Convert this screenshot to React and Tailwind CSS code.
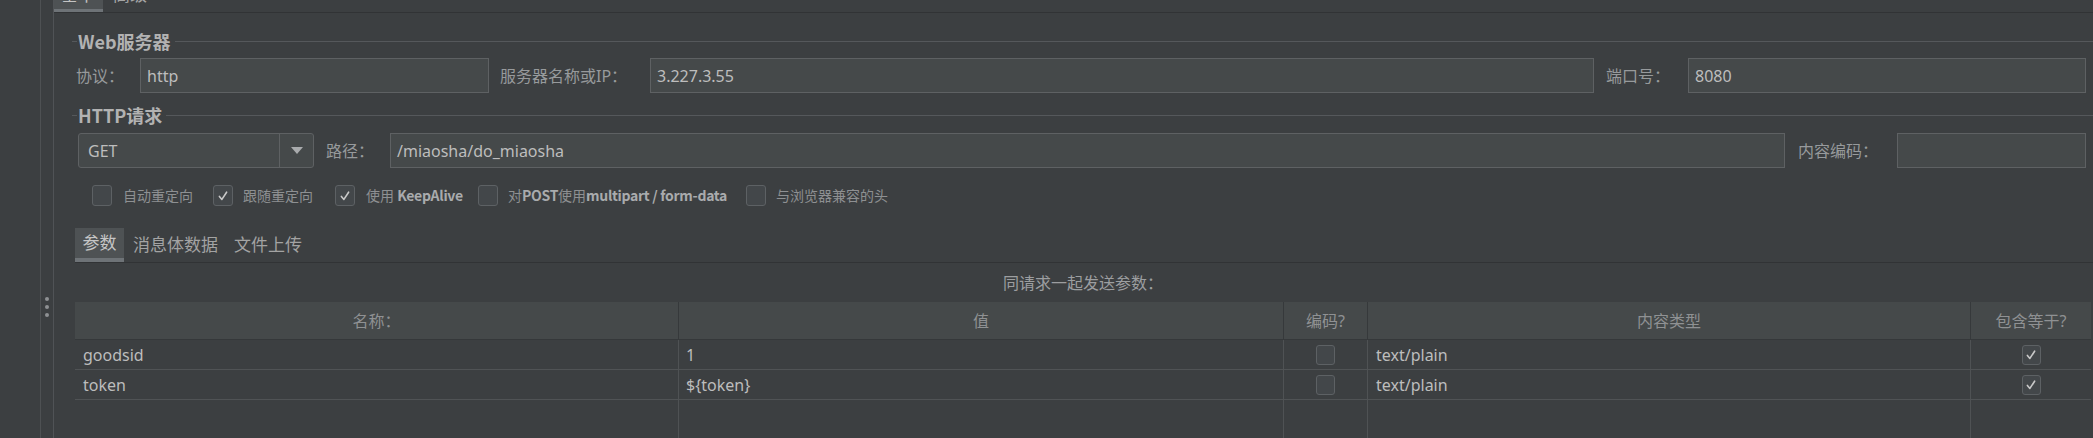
import React from "react";

function Check({ checked, small }) {
  return (
    <div
      className={
        small
          ? "w-[19px] h-[20px] shrink-0 flex items-center justify-center rounded-[3px] border border-[#5d6164] bg-[#43474a]"
          : "w-[20px] h-[21px] shrink-0 flex items-center justify-center rounded-[3px] border border-[#5d6164] bg-[#43474a]"
      }
    >
      {checked && (
        <svg viewBox="0 0 12 12" className="w-[12px] h-[12px]">
          <path d="M2.4 6.4 L4.9 9.4 L9.6 2.2" fill="none" stroke="#c9c9c9" strokeWidth="1.6" strokeLinecap="round" strokeLinejoin="round" />
        </svg>
      )}
    </div>
  );
}

function GroupTitle({ children }) {
  return (
    <div className="h-[20px] flex items-center -ml-[4px] -mr-[7px]">
      <div className="w-[5px] h-px bg-[#55585b]" />
      <span className="pl-[1px] text-[18px] leading-none font-semibold text-[#b2b2b2] font-['Noto_Sans_CJK_SC',sans-serif]">
        {children}
      </span>
      <div className="flex-1 h-px bg-[#55585b] ml-[4px]" />
    </div>
  );
}

function Field({ w, children }) {
  return (
    <div className={"h-[35px] shrink-0 border border-[#5e6163] bg-[#45494a] flex items-center pl-[6px] text-[16px] text-[#bdbdbd] " + w}>
      {children}
    </div>
  );
}

export default function App() {
  return (
    <div className="w-[2093px] h-[438px] overflow-hidden bg-[#3c3f41] flex font-['Noto_Sans','Noto_Sans_CJK_SC',sans-serif] text-[#bbbbbb]">
      <div className="w-[41px] shrink-0 border-r border-[#4e5153]" />
      <div className="w-[13px] shrink-0 border-r border-[#505356] flex flex-col items-center pt-[297px] gap-[4px]">
        <div className="w-[4px] h-[4px] rounded-full bg-[#8e9193]" />
        <div className="w-[4px] h-[4px] rounded-full bg-[#8e9193]" />
        <div className="w-[4px] h-[4px] rounded-full bg-[#8e9193]" />
      </div>

      <div className="flex-1 min-w-0 flex flex-col">
        {/* top tabs, clipped by the window edge */}
        <div className="h-[13px] shrink-0 flex border-b border-[#313335] overflow-hidden">
          <div className="w-[50px] -ml-[1px] h-[12px] bg-[#4e5254] border-b-[3px] border-[#6e7377] overflow-hidden flex justify-center">
            <span className="-mt-[16px] text-[17px] leading-[22px] text-[#c4c4c4]">基本</span>
          </div>
          <div className="h-[12px] overflow-hidden pl-[10px]">
            <span className="-mt-[16px] block text-[17px] leading-[22px] text-[#a5a5a5]">高级</span>
          </div>
        </div>

        <div className="flex-1 flex flex-col pl-[22px] pr-[7px] min-h-0">
          <div className="mt-[18px]">
            <GroupTitle>Web服务器</GroupTitle>
          </div>

          <div className="mt-[7px] h-[35px] flex items-center text-[16px]">
            <div className="w-[64px] shrink-0 text-[#979a9c]">协议：</div>
            <Field w="w-[349px]">http</Field>
            <div className="w-[161px] shrink-0 pl-[11px] text-[#979a9c]">服务器名称或IP：</div>
            <Field w="w-[944px]">3.227.3.55</Field>
            <div className="w-[94px] shrink-0 pl-[12px] text-[#979a9c]">端口号：</div>
            <Field w="w-[398px]">8080</Field>
          </div>

          <div className="mt-[12px]">
            <GroupTitle>HTTP请求</GroupTitle>
          </div>

          <div className="mt-[8px] h-[35px] flex items-center text-[16px]">
            <div className="ml-[2px] w-[236px] h-[35px] shrink-0 rounded-[3px] border border-[#5e6163] bg-[#45494a] flex">
              <div className="flex-1 flex items-center pl-[9px] text-[#bdbdbd]">GET</div>
              <div className="w-[34px] border-l border-[#5e6163] flex items-center justify-center">
                <svg viewBox="0 0 12 7" className="w-[12px] h-[7px]">
                  <path d="M0 0 L12 0 L6 7 Z" fill="#a9abad" />
                </svg>
              </div>
            </div>
            <div className="w-[76px] shrink-0 pl-[12px] text-[#979a9c]">路径：</div>
            <Field w="w-[1395px]">/miaosha/do_miaosha</Field>
            <div className="w-[112px] shrink-0 pl-[13px] text-[#979a9c]">内容编码：</div>
            <Field w="w-[189px]"></Field>
          </div>

          <div className="mt-[17px] h-[21px] flex items-center ml-[16px] text-[14px] text-[#8e9092] font-['Noto_Sans_CJK_SC',sans-serif]">
            <div className="w-[121px] shrink-0 flex items-center">
              <Check />
              <span className="ml-[11px]">自动重定向</span>
            </div>
            <div className="w-[122px] shrink-0 flex items-center">
              <Check checked />
              <span className="ml-[10px]">跟随重定向</span>
            </div>
            <div className="w-[143px] shrink-0 flex items-center">
              <Check checked />
              <span className="ml-[11px]">
                使用 <span className="font-semibold text-[#a9abad] tracking-[-0.3px]">KeepAlive</span>
              </span>
            </div>
            <div className="w-[268px] shrink-0 flex items-center">
              <Check />
              <span className="ml-[10px]">
                对<span className="font-semibold text-[#a9abad] tracking-[-0.3px]">POST</span>使用
                <span className="font-semibold text-[#a9abad] tracking-[-0.3px]">multipart / form-data</span>
              </span>
            </div>
            <div className="flex items-center">
              <Check />
              <span className="ml-[10px]">与浏览器兼容的头</span>
            </div>
          </div>

          <div className="mt-[22px] -ml-[1px] -mr-[7px] h-[35px] shrink-0 flex border-b border-[#313335] text-[17px]">
            <div className="w-[49px] h-[34px] bg-[#4e5254] border-b-[4px] border-[#6e7377] flex items-center justify-center text-[#c6c6c6]">
              参数
            </div>
            <div className="h-[34px] pl-[9px] pr-[8px] flex items-center text-[#a3a3a3]">消息体数据</div>
            <div className="h-[34px] pl-[8px] flex items-center text-[#a3a3a3]">文件上传</div>
          </div>

          <div className="mt-[10px] h-[20px] flex items-center justify-center -ml-[1px] -mr-[5px] text-[16px] text-[#9c9ea0]">
            同请求一起发送参数：
          </div>

          <div className="mt-[9px] -ml-[1px] -mr-[5px] flex-1 flex flex-col min-h-0 text-[16px]">
            <div className="grid grid-cols-[603px_605px_84px_603px_1fr] h-[38px] bg-[#45494a] border-b border-[#35383a] text-[#8f9193]">
              <div className="flex items-center justify-center">名称：</div>
              <div className="flex items-center justify-center border-l border-[#36393b]">值</div>
              <div className="flex items-center justify-center border-l border-[#36393b]">编码?</div>
              <div className="flex items-center justify-center border-l border-[#36393b]">内容类型</div>
              <div className="flex items-center justify-center border-l border-[#36393b]">包含等于?</div>
            </div>

            <div className="grid grid-cols-[603px_605px_84px_603px_1fr] h-[30px] border-b border-[#505355] text-[#bdbdbd]">
              <div className="flex items-center pl-[8px]">goodsid</div>
              <div className="flex items-center pl-[7px] border-l border-[#4f5254]">1</div>
              <div className="flex items-center justify-center border-l border-[#4f5254]"><Check small /></div>
              <div className="flex items-center pl-[8px] border-l border-[#4f5254]">text/plain</div>
              <div className="flex items-center justify-center border-l border-[#4f5254]"><Check small checked /></div>
            </div>
            <div className="grid grid-cols-[603px_605px_84px_603px_1fr] h-[30px] border-b border-[#505355] text-[#bdbdbd]">
              <div className="flex items-center pl-[8px]">token</div>
              <div className="flex items-center pl-[7px] border-l border-[#4f5254]">{"${token}"}</div>
              <div className="flex items-center justify-center border-l border-[#4f5254]"><Check small /></div>
              <div className="flex items-center pl-[8px] border-l border-[#4f5254]">text/plain</div>
              <div className="flex items-center justify-center border-l border-[#4f5254]"><Check small checked /></div>
            </div>

            <div className="flex-1 grid grid-cols-[603px_605px_84px_603px_1fr]">
              <div />
              <div className="border-l border-[#4f5254]" />
              <div className="border-l border-[#4f5254]" />
              <div className="border-l border-[#4f5254]" />
              <div className="border-l border-[#4f5254]" />
            </div>
          </div>
        </div>
      </div>
    </div>
  );
}
